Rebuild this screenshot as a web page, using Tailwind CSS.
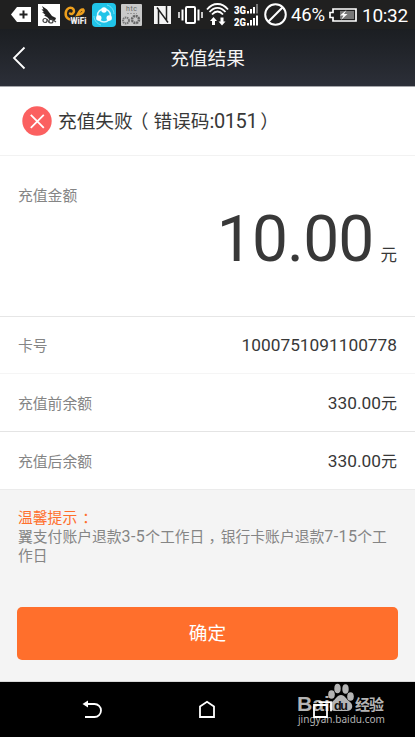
<!DOCTYPE html>
<html lang="zh-CN">
<head>
  <meta charset="UTF-8" />
  <meta name="viewport" content="width=device-width, initial-scale=1.0" />
  <title>充值结果</title>
  <script src="https://cdn.jsdelivr.net/npm/@tailwindcss/browser@4"></script>
</head>
<body class="h-[737px] w-[415px] overflow-hidden flex flex-col bg-[#f4f4f4] text-[#383838] font-[Roboto,'Noto_Sans_CJK_SC',sans-serif]">

  <!-- Status bar -->
  <div class="h-[29px] shrink-0 bg-[#202020] flex items-center pl-[11px] text-white">
    <svg class="w-5 h-[15px] shrink-0" viewBox="0 0 20 15"><path d="M0 7.5 6 0h14v15H6z" fill="#fff"/><path d="M8.5 7.5h8M12.500 3.500v8" stroke="#202020" stroke-width="2"/></svg>
    <svg class="w-[22px] h-[22px] shrink-0 ml-[7px]" viewBox="0 0 22 22"><path d="M0 0h22v22H0z" fill="#fff"/><path d="M4 2 9 5.500l5 6.500 4 2-1 2.500-5-.5-3-3-3-1.500 1.500-.5-3.500-3 2 .3-2.500-3 2 .2z" fill="#222"/><g fill="none" stroke="#444" stroke-width="1.200"><circle cx="7" cy="16.500" r="2"/><circle cx="13" cy="17" r="2"/><path d="M9 15l2 3.500M15 16l3 2"/></g></svg>
    <svg class="w-[23px] h-[20px] shrink-0 ml-[4px]" viewBox="0 0 23 20"><path d="M6 8.500c1.500 1 4 0 4-2.500S7 2 5 3C1 5 .5 11 4 13.500S12 13 13.500 10 16 4 19 4.500c1.500 1.500 0 4-4 5" fill="none" stroke="#efa01d" stroke-width="2.500" stroke-linecap="round"/><text x="6.500" y="18.500" font-size="8.500" font-weight="900" fill="#eee" stroke="#222" stroke-width="1.500" paint-order="stroke" textLength="16" lengthAdjust="spacingAndGlyphs">WiFi</text></svg>
    <svg class="w-6 h-6 shrink-0 ml-[5px]" viewBox="0 0 24 24"><rect width="24" height="24" rx="4" fill="#20c4e8"/><circle cx="12" cy="12.500" r="6.500" fill="none" stroke="#d9f8ff" stroke-width="1.500"/><circle cx="12" cy="7" r="2.700" fill="#fff"/><circle cx="6.800" cy="15" r="2.700" fill="#fff"/><circle cx="17.200" cy="15" r="2.700" fill="#fff"/><path d="M2 13c0 4 3 8 7 9M15 2c4 1 7 5 7 9" fill="none" stroke="#8fe6f7" stroke-width=".8"/></svg>
    <svg class="w-[21px] h-[22px] shrink-0 ml-[5px]" viewBox="0 0 21 22"><rect width="21" height="22" rx="1" fill="#c9c9c9"/><text x="5" y="7" font-size="7" fill="#666" textLength="11">htc</text><path d="M6 9.500h10" stroke="#999" stroke-dasharray="2 1"/><circle cx="5" cy="16.500" r="3" fill="none" stroke="#777" stroke-width="2" stroke-dasharray="1.500 .6"/><circle cx="14.500" cy="15.500" r="3.500" fill="none" stroke="#666" stroke-width="2.500" stroke-dasharray="2 .7"/></svg>
    <svg class="w-[17px] h-[18px] shrink-0 ml-[12px]" viewBox="0 0 17 18"><path d="M0 0h17v18H0z" fill="#f4f4f4"/><path d="M4.500 18V3.500l8 11V0M4.500 3.500 3 1.500M12.500 14.500l1.500 2" fill="none" stroke="#202020" stroke-width="1.500"/></svg>
    <svg class="w-[25px] h-[18px] shrink-0 ml-[7px]" viewBox="0 0 25 18" fill="none" stroke="#fff"><rect x="8" y="1" width="9" height="16" rx="1" stroke-width="2"/><path d="M4.500 3.500v11M20.500 3.500v11" stroke-width="2"/><path d="M1 6v6M24 6v6" stroke-width="1.500"/></svg>
    <svg class="w-[23px] h-[23px] shrink-0 ml-[3px]" viewBox="0 0 23 23" fill="none" stroke="#fff" stroke-width="1.800"><path d="M1 6.500C7-.8 16-.8 22 6.500M3.500 9c5-5.500 11-5.500 16 0M6 11.500c3.500-4 7.500-4 11 0"/><path d="M4 18l3.500-4 3.500 4H9v4H6v-4zM12.500 18.500l3.500 4 3.500-4h-2v-4h-3v4z" fill="#fff" stroke="none"/></svg>
    <svg class="w-[24px] h-[22px] shrink-0 ml-[5px]" viewBox="0 0 24 22" fill="#fff"><g font-size="10" font-weight="900"><text x="0" y="9.500" textLength="12" lengthAdjust="spacingAndGlyphs">3G</text><text x="0" y="21.500" textLength="12" lengthAdjust="spacingAndGlyphs">2G</text></g><path d="M13 7h2v2.500h-2zM16 5h2v4.500h-2zM19 3h2v6.500h-2zM13 19h2v2.500h-2zM16 16h2v5.500h-2zM19 14h2v7.500h-2zM22 11.500h2v10h-2z"/><path d="M22 0h2v9.500h-2z" fill="#777"/></svg>
    <svg class="w-[23px] h-[23px] shrink-0 ml-[6px]" viewBox="0 0 23 23" fill="none" stroke="#fff" stroke-width="2"><circle cx="11.500" cy="11.500" r="10.300"/><path d="M4.300 18.700 18.700 4.300"/></svg>
    <span class="w-[36px] shrink-0 ml-[4px] pt-[2px] text-[18.500px] leading-none tracking-[-0.2px]">46%</span>
    <svg class="w-[28px] h-[14px] shrink-0 ml-[2px]" viewBox="0 0 28 14"><path d="M4 1h23v12H4V9.500H1v-5h3z" fill="none" stroke="#fff" stroke-width="1.700"/><path d="M11 3h14v8H11z" fill="#777"/><path d="M17.500 2 11 7.500h3.500L12 12l6.500-6h-3.500z" fill="#fff"/></svg>
    <span class="shrink-0 ml-[5px] pt-px text-[19px] leading-none tracking-[-0.3px]">10:32</span>
  </div>

  <!-- Header -->
  <header class="h-[58px] shrink-0 relative flex items-center justify-center bg-linear-to-b from-[#1b1e22] to-[#2c2f38] border-b border-[#a5a6aa] text-[#f5f5f5]">
    <svg class="absolute left-3 top-[17px] w-[14px] h-6" viewBox="0 0 14 24"><path d="M12.500 1.500 2 12l10.500 10.500" fill="none" stroke="#fff" stroke-width="1.800"/></svg>
    <h1 class="pt-[2px] text-[18.700px] leading-6">充值结果</h1>
  </header>

  <main class="shrink-0 bg-white">
    <div class="h-[69px] flex items-center pl-[22px] border-b border-[#f2f2f2]">
      <svg class="w-[30px] h-[30px]" viewBox="0 0 30 30"><circle cx="15" cy="15" r="14.700" fill="#fb6060"/><path d="m8.800 8.800 13 13m0-13-13 13" stroke="#fff" stroke-width="1.800"/></svg>
      <span class="ml-[6px] pt-px text-[18.700px] whitespace-nowrap">充值失败<span class="-ml-[3px] mr-[5px]">（</span>错误码<span class="text-[20px] tracking-[-0.400px]">:0151</span><span class="ml-[3px]">）</span></span>
    </div>
    <div class="h-[161px] px-[18px] pt-[28px] border-b border-[#e6e6e6]">
      <p class="text-[14.800px] leading-6 text-[#858585]">充值金额</p>
      <p class="flex items-baseline justify-end leading-[64px]"><span class="text-[64px] tracking-[-0.800px]">10.00</span><span class="ml-[7px] text-[16.500px]">元</span></p>
    </div>
    <dl>
      <div class="h-[57px] pt-[2px] px-[18px] flex items-center justify-between border-b border-[#f5f5f5]">
        <dt class="text-[14.800px] text-[#858585]">卡号</dt>
        <dd class="text-[17.300px]">1000751091100778</dd>
      </div>
      <div class="h-[58px] pt-[3px] px-[18px] flex items-center justify-between border-b border-[#e4e4e4]">
        <dt class="text-[14.800px] text-[#858585]">充值前余额</dt>
        <dd class="text-[17.300px]">330.00<span class="text-[16px]">元</span></dd>
      </div>
      <div class="h-[58px] pt-[3px] px-[18px] flex items-center justify-between border-b border-[#ebebeb]">
        <dt class="text-[14.800px] text-[#858585]">充值后余额</dt>
        <dd class="text-[17.300px]">330.00<span class="text-[16px]">元</span></dd>
      </div>
    </dl>
  </main>

  <!-- Tips and confirm button -->
  <section class="h-[192px] shrink-0 px-[17px] pt-[19px] border-b border-[#d8d8d8]">
    <div class="h-[98px] pl-px text-[14.800px] leading-[19px] text-[#858585] whitespace-nowrap">
      <p class="h-[19px] text-[#ff6f2c]">温馨提示<span class="relative left-[5px]">：</span></p>
      <p class="h-[19px]">翼支付账户退款<span class="text-[16px] tracking-[0.400px] leading-none">3-5</span>个工作日<span class="ml-[4px] -mr-[2.500px]">，</span>银行卡账户退款<span class="text-[16px] tracking-[0.400px] leading-none">7-15</span>个工</p>
      <p>作日</p>
    </div>
    <button class="w-[381px] h-[53px] pt-[2px] rounded-[5px] bg-[#ff6f2c] text-white text-[18.700px]">确定</button>
  </section>

  <!-- Navigation bar -->
  <nav class="flex-1 relative bg-black">
    <svg class="absolute left-[82px] top-[18px] w-5 h-5" viewBox="0 0 20 20"><path d="M3 4h9.500a6.500 6.500 0 0 1 0 13H3" fill="none" stroke="#fff" stroke-width="1.800"/><path d="M.5 4 6 .5v7z" fill="#fff"/></svg>
    <svg class="absolute left-[198px] top-[18px] w-[18px] h-[19px]" viewBox="0 0 18 19"><path d="M2 17V6.500l7-4.700 7 4.700V17z" fill="none" stroke="#fff" stroke-width="1.800"/></svg>
    <!-- Watermark -->
    <svg class="absolute left-[296px] top-0 w-[100px] h-[48px]" viewBox="0 0 100 48" fill="#b4b4b4">
      <text x="1" y="28.500" font-family="Liberation Sans" font-weight="700" font-size="20" textLength="33" lengthAdjust="spacingAndGlyphs">Bai</text>
      <ellipse cx="35.500" cy="12.500" rx="3.300" ry="4.300"/><ellipse cx="41.500" cy="6.500" rx="3.200" ry="4.700"/><ellipse cx="49.500" cy="7" rx="3.200" ry="4.700"/><ellipse cx="54.500" cy="14.500" rx="3.300" ry="4.300"/>
      <path d="M45 13c4 0 5 4 9 7s2.500 9-3 9H39c-5.500 0-7-6-3-9s5-7 9-7z"/>
      <text x="38" y="27.500" font-family="Liberation Sans" font-size="12.500" font-weight="700" fill="#111" textLength="14">du</text>
      <text x="59" y="28" font-family="Noto Sans CJK SC" font-size="15" font-weight="700" textLength="29">经验</text>
      <text x="2" y="41" font-family="Noto Sans" font-size="11" textLength="87" lengthAdjust="spacingAndGlyphs">jingyan.baidu.com</text>
    </svg>
    <svg class="absolute left-[312px] top-[19px] w-[20px] h-[18px]" viewBox="0 0 20 18" fill="none" stroke="#fff" stroke-width="1.800"><path d="M2 4h13v12H2zM6.500 1.200h12.500v9"/></svg>
  </nav>
</body>
</html>
